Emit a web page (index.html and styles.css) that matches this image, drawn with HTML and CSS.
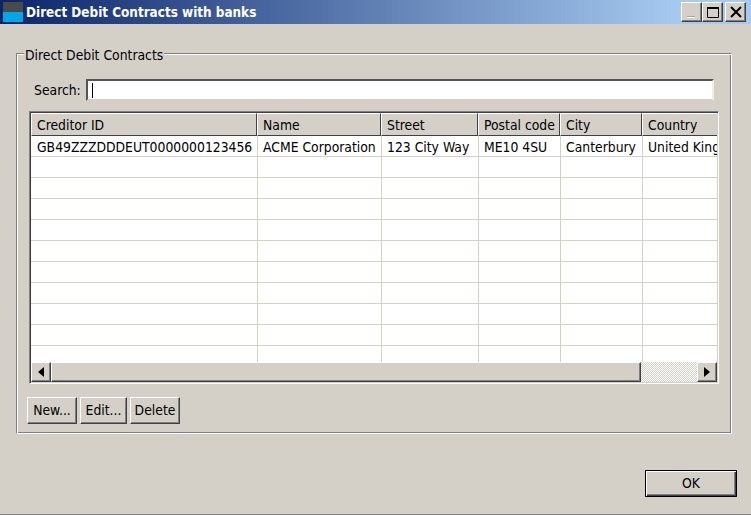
FILE: index.html
```html
<!DOCTYPE html>
<html lang="en">
<head>
<meta charset="utf-8">
<title>Direct Debit Contracts with banks</title>
<link rel="stylesheet" href="styles.css">
</head>
<body>
<div class="window">
  <header class="titlebar">
    <svg class="appicon" width="20" height="20" viewBox="0 0 20 20"><rect width="20" height="10" fill="#4a4a4a"/><rect y="10" width="20" height="10" fill="#00a8e8"/></svg>
    <span class="title">Direct Debit Contracts with banks</span>
    <div class="winbtns">
      <button class="winbtn"><svg width="16" height="14" viewBox="0 0 16 14"><rect x="3" y="11" width="8" height="1" fill="#a5a5a5"/><rect x="3" y="12" width="8" height="1" fill="#fff"/></svg></button>
      <button class="winbtn"><svg width="16" height="14" viewBox="0 0 16 14"><path d="M2.500 2.500h11v10h-11z" fill="none" stroke="#000"/><rect x="2" y="2" width="12" height="2"/></svg></button>
      <button class="winbtn close"><svg width="16" height="14" viewBox="0 0 16 14"><path d="M3 2l10 10M13 2L3 12" stroke="#000" stroke-width="2" fill="none"/></svg></button>
    </div>
  </header>
  <main class="content">
    <fieldset class="group">
      <legend>Direct Debit Contracts</legend>
      <div class="searchrow">
        <label>Search:</label>
        <div class="searchbox"><span class="caret"></span></div>
      </div>
      <div class="tableframe">
        <div class="tablearea">
          <table>
            <colgroup><col class="c1"><col class="c2"><col class="c3"><col class="c4"><col class="c5"><col class="c6"></colgroup>
            <thead><tr><th>Creditor ID</th><th>Name</th><th>Street</th><th>Postal code</th><th>City</th><th>Country</th></tr></thead>
            <tbody>
              <tr><td>GB49ZZZDDDEUT0000000123456</td><td>ACME Corporation</td><td>123 City Way</td><td>ME10 4SU</td><td>Canterbury</td><td>United Kingdom</td></tr>
              <tr><td></td><td></td><td></td><td></td><td></td><td></td></tr>
              <tr><td></td><td></td><td></td><td></td><td></td><td></td></tr>
              <tr><td></td><td></td><td></td><td></td><td></td><td></td></tr>
              <tr><td></td><td></td><td></td><td></td><td></td><td></td></tr>
              <tr><td></td><td></td><td></td><td></td><td></td><td></td></tr>
              <tr><td></td><td></td><td></td><td></td><td></td><td></td></tr>
              <tr><td></td><td></td><td></td><td></td><td></td><td></td></tr>
              <tr><td></td><td></td><td></td><td></td><td></td><td></td></tr>
              <tr><td></td><td></td><td></td><td></td><td></td><td></td></tr>
              <tr><td></td><td></td><td></td><td></td><td></td><td></td></tr>
            </tbody>
          </table>
        </div>
        <div class="scrollbar">
          <div class="sb-btn"><svg width="6" height="10" viewBox="0 0 6 10"><path d="M6 0v10L0 5z"/></svg></div>
          <div class="sb-thumb"></div>
          <div class="sb-track"></div>
          <div class="sb-btn"><svg width="6" height="10" viewBox="0 0 6 10"><path d="M0 0v10l6-5z"/></svg></div>
        </div>
      </div>
      <div class="actions">
        <button class="btn b-new">New...</button>
        <button class="btn b-edit">Edit...</button>
        <button class="btn b-del">Delete</button>
      </div>
    </fieldset>
    <div class="footer"><button class="btn ok"><span>OK</span></button></div>
  </main>
</div>
</body>
</html>
```
FILE: styles.css
```css
* { box-sizing: border-box; }
html, body { margin: 0; padding: 0; }
body { width: 751px; height: 515px; overflow: hidden; background: #d4d0c8; font-family: "DejaVu Sans Condensed", "DejaVu Sans", sans-serif; font-size: 13.8px; color: #000; }
.window { width: 751px; height: 515px; display: flex; flex-direction: column; border-bottom: 1px solid #808080; }
.titlebar { height: 24px; flex: none; display: flex; align-items: center; padding: 0 5px 0 3px; background: linear-gradient(90deg, #0a246a, #a6caf0 680px); }
.appicon { flex: none; }
.title { margin-left: 3px; color: #fff; font-weight: bold; font-size: 13.4px; flex: 1; }
.winbtns { display: flex; }
.winbtn { width: 21px; height: 20px; padding: 0; margin: 0; display: flex; align-items: center; justify-content: center; background: #d4d0c8; border: 1px solid; border-color: #fff #404040 #404040 #fff; box-shadow: inset -1px -1px 0 #808080; }
.winbtn.close { margin-left: 2px; }
.content { flex: 1; display: flex; flex-direction: column; padding: 19px 16px 0 16px; }
.group { margin: 0; width: 716px; height: 391px; padding: 0 10px; min-width: 0; border: 1px solid; border-color: #808080 #fff #fff #808080; box-shadow: inset 1px 1px 0 #fff, inset -1px -1px 0 #808080; }
.group legend { padding: 4px 1px 0; margin-left: -3px; line-height: 16px; height: 20px; background: #d4d0c8; }
.searchrow { display: flex; align-items: center; height: 24px; margin-top: 15px; }
.searchrow label { margin-left: 7px; width: 52px; }
.searchbox { width: 628px; height: 22px; background: #fff; border: 2px solid; border-color: #555 #f0eee9 #d4d0c8 #555; display: flex; align-items: center; padding-left: 4px; }
.caret { width: 1px; height: 15px; background: #000; }
.tableframe { margin: 9px 0 0 2px; width: 690px; height: 273px; border: 1px solid; border-color: #808080 #fff #fff #808080; background: #fff; display: flex; flex-direction: column; padding: 1px; box-shadow: inset 1px 1px 0 #404040, inset -1px -1px 0 #d4d0c8; }
.tablearea { flex: 1; overflow: hidden; }
table { border-collapse: separate; border-spacing: 0; table-layout: fixed; width: 700px; }
.c1 { width: 226px; } .c2 { width: 124px; } .c3 { width: 97px; } .c4 { width: 82px; } .c5 { width: 82px; } .c6 { width: 89px; }
th { height: 23px; font-weight: normal; text-align: left; padding: 0 0 0 5px; background: #d4d0c8; border: 1px solid; border-color: #fff #404040 #404040 #fff; white-space: nowrap; overflow: hidden; }
td { height: 21px; padding: 1px 0 0 6px; border-bottom: 1px solid #d4d0c8; white-space: nowrap; overflow: hidden; }
td + td { padding-left: 5px; border-left: 1px solid #d4d0c8; }
.scrollbar { height: 20px; flex: none; display: flex; background: #d4d0c8; }
.sb-btn { width: 20px; flex: none; display: flex; align-items: center; justify-content: center; background: #d4d0c8; border: 1px solid; border-color: #fff #404040 #404040 #fff; box-shadow: inset -1px -1px 0 #808080; }
.sb-thumb { width: 590px; background: #d4d0c8; border: 1px solid; border-color: #fff #404040 #404040 #fff; box-shadow: inset -1px -1px 0 #808080; }
.sb-track { flex: 1; background: repeating-conic-gradient(#fff 0 25%, #d4d0c8 0 50%) 0 0 / 2px 2px; }
.actions { display: flex; gap: 3px; margin-top: 13px; }
.btn { height: 27px; padding: 0 0 2px; font: inherit; color: #000; background: #d4d0c8; border: 1px solid; border-color: #fff #404040 #404040 #fff; box-shadow: inset -1px -1px 0 #808080; }
.b-new { width: 50px; } .b-edit { width: 47px; } .b-del { width: 50px; }
.footer { display: flex; justify-content: flex-end; margin-top: 36px; }
.ok { width: 92px; height: 27px; border: 1px solid #000; box-shadow: inset 1px 1px 0 #fff, inset -1px -1px 0 #404040, inset -2px -2px 0 #808080; margin-right: -2px; }
```
